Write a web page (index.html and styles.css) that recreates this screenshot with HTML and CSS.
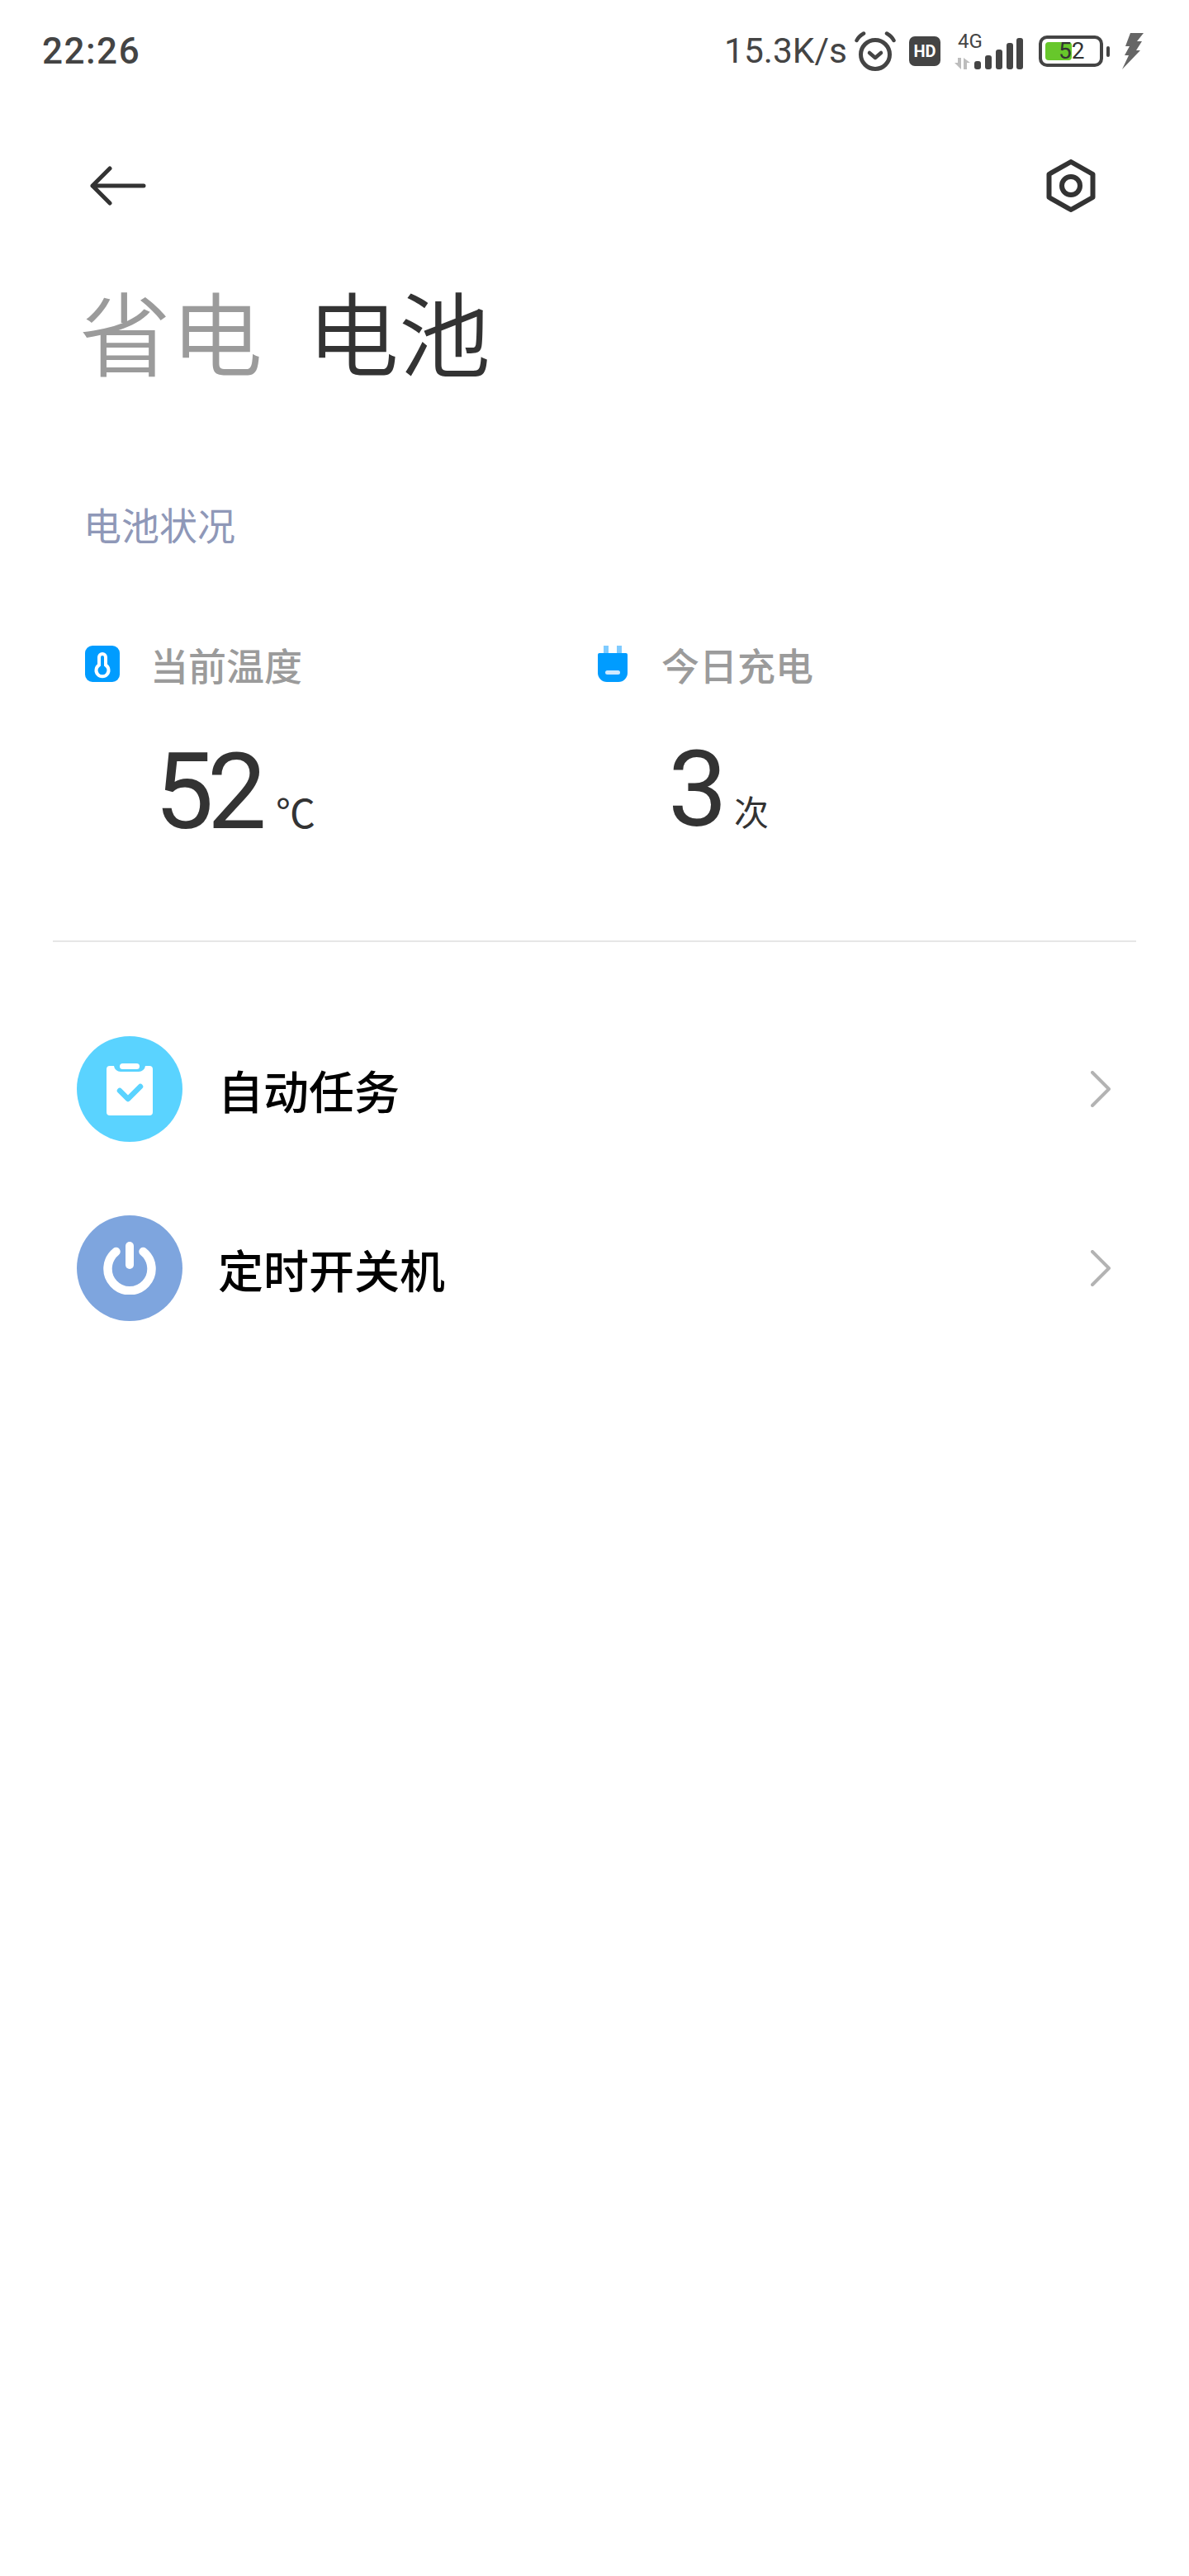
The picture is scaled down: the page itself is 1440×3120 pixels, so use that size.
FILE: index.html
```html
<!DOCTYPE html>
<html lang="zh-CN">
<head>
<meta charset="utf-8">
<title>电池</title>
<link rel="stylesheet" href="styles.css">
</head>
<body>
<div class="screen">
  <header class="status">
    <span class="clock">22:26</span>
    <div class="status-right">
      <span class="speed">15.3K/s</span>
      <svg class="ic-alarm" width="50" height="48" viewBox="0 0 50 48" fill="none" stroke="#444" stroke-linecap="round">
        <circle cx="25" cy="28" r="17.5" stroke-width="5"/>
        <path d="M18 26l7 6 7-6" stroke-width="4.5" stroke-linejoin="round"/>
        <path d="M2.500 11Q5 6 11 2.500M47.500 11Q45 6 39 2.500" stroke-width="4.5"/>
      </svg>
      <span class="hd">HD</span>
      <div class="signal">
        <span class="net">4G</span>
        <svg width="83" height="44" viewBox="0 0 83 44">
          <g fill="#bdbdbd"><path d="M4 30h4v14L0 36h4z"/><path d="M11 30v14h4v-8h4z"/></g>
          <g fill="#444">
            <rect x="24" y="34" width="8" height="10" rx="3"/>
            <rect x="37" y="27" width="8" height="17" rx="3"/>
            <rect x="50" y="20" width="8" height="24" rx="3"/>
            <rect x="63" y="12" width="8" height="32" rx="3"/>
            <rect x="75" y="6" width="8" height="38" rx="3"/>
          </g>
        </svg>
      </div>
      <div class="battery">
        <div class="battery-body"><span class="battery-fill"></span><span class="battery-num">52</span></div>
        <span class="battery-cap"></span>
      </div>
      <svg class="ic-bolt" width="27" height="44" viewBox="0 0 27 44"><path d="M11 0H27L19 10H25L18 21H23L1 44L9 27H4L10 16H5Z" fill="#666"/></svg>
    </div>
  </header>

  <nav class="toolbar">
    <svg width="68" height="48" viewBox="0 0 68 48" fill="none" stroke="#333" stroke-width="5" stroke-linecap="round" stroke-linejoin="round"><path d="M24 3L3 24L24 45M3 24H65"/></svg>
    <svg width="60" height="64" viewBox="0 0 60 64" fill="none" stroke="#333"><path d="M30 3L56.500 18V46L30 61L3.500 46V18Z" stroke-width="6" stroke-linejoin="round"/><circle cx="30" cy="32" r="11" stroke-width="6"/></svg>
  </nav>

  <div class="tabs">
    <span class="tab tab-off">省电</span>
    <span class="tab tab-on">电池</span>
  </div>

  <section class="status-section">
    <h2 class="section-title">电池状况</h2>
    <div class="stats">
      <div class="stat">
        <div class="stat-head">
          <svg width="42" height="44" viewBox="0 0 42 44"><rect width="42" height="44" rx="9" fill="#009cff"/><path d="M21 10a4 4 0 0 1 4 4v9.500a7.500 7.500 0 1 1-8 0V14a4 4 0 0 1 4-4z" fill="none" stroke="#fff" stroke-width="4"/></svg>
          <span class="stat-label">当前温度</span>
        </div>
        <div class="stat-value"><span class="num">52</span><span class="unit unit-c">℃</span></div>
      </div>
      <div class="stat stat-second">
        <div class="stat-head">
          <svg width="36" height="44" viewBox="0 0 36 44"><path d="M7 0h6v10H7zM23 0h6v10h-6z" fill="#7fcbff"/><path d="M0 11a2 2 0 0 1 2-2h32a2 2 0 0 1 2 2v22a11 11 0 0 1-11 11H11A11 11 0 0 1 0 33z" fill="#009cff"/><rect x="9" y="30" width="18" height="5" rx="2.500" fill="#cfeaff"/></svg>
          <span class="stat-label">今日充电</span>
        </div>
        <div class="stat-value"><span class="num">3</span><span class="unit">次</span></div>
      </div>
    </div>
  </section>

  <hr class="divider">

  <ul class="list">
    <li class="row">
      <span class="badge badge-cyan">
        <svg width="56" height="63" viewBox="0 0 56 63"><path d="M4 3h5a8 8 0 0 0 8 7h22a8 8 0 0 0 8-7h5a4 4 0 0 1 4 4v52a4 4 0 0 1-4 4H4a4 4 0 0 1-4-4V7a4 4 0 0 1 4-4z" fill="#fff"/><rect x="16" y="0" width="24" height="7" rx="3.500" fill="#fff"/><path d="M16 33l10 10 15-15" fill="none" stroke="#5ad3ff" stroke-width="6.500" stroke-linecap="round" stroke-linejoin="round"/></svg>
      </span>
      <span class="row-label">自动任务</span>
      <svg class="chev" width="24" height="44" viewBox="0 0 24 44" fill="none" stroke="#b3b3b3" stroke-width="4" stroke-linecap="round" stroke-linejoin="round"><path d="M2 2L22 22L2 42"/></svg>
    </li>
    <li class="row">
      <span class="badge badge-blue">
        <svg width="64" height="64" viewBox="0 0 64 64" fill="none" stroke="#fff" stroke-linecap="round"><path d="M15.500 12a26.500 26.500 0 1 0 33 0" stroke-width="10.500"/><path d="M32 5V28" stroke-width="10"/></svg>
      </span>
      <span class="row-label">定时开关机</span>
      <svg class="chev" width="24" height="44" viewBox="0 0 24 44" fill="none" stroke="#b3b3b3" stroke-width="4" stroke-linecap="round" stroke-linejoin="round"><path d="M2 2L22 22L2 42"/></svg>
    </li>
  </ul>
</div>
</body>
</html>
```

FILE: styles.css
```css
* { box-sizing: border-box; margin: 0; padding: 0; }
html, body { background: #fff; }
body { font-family: "Noto Sans CJK SC", "Noto Sans", sans-serif; width: 1440px; height: 3120px; overflow: hidden; }
.screen { width: 1440px; height: 3120px; display: flex; flex-direction: column; }

.status { height: 124px; padding: 0 55px 0 51px; display: flex; justify-content: space-between; align-items: center; color: #444; }
.clock { font: 500 44px/1 Roboto, sans-serif; letter-spacing: 1.500px; }
.status-right { display: flex; align-items: center; }
.speed { font: 400 42.5px/1 Roboto, sans-serif; margin-right: 9px; }
.ic-alarm { margin-right: 16px; }
.hd { width: 38px; height: 36px; border-radius: 7px; background: #444; color: #fff; font: 700 20px/36px Roboto, sans-serif; text-align: center; margin-right: 17px; }
.signal { position: relative; width: 83px; height: 44px; margin-right: 19px; }
.signal svg { display: block; }
.net { position: absolute; top: -2px; left: 4px; font: 400 24px/1 Roboto, sans-serif; }
.battery { display: flex; align-items: center; margin-right: 14px; }
.battery-body { position: relative; width: 78px; height: 38px; border: 4px solid #444; border-radius: 10px; padding: 4px; }
.battery-fill { display: block; width: 32px; height: 22px; background: #67c72b; border-radius: 4px; }
.battery-num { position: absolute; top: 2px; left: 20px; font: 400 28px/26px Roboto, sans-serif; color: #333; }
.battery-cap { width: 4px; height: 13px; background: #444; border-radius: 2px; margin-left: 4px; }

.toolbar { height: 96px; margin-top: 53px; padding: 0 113px 0 109px; display: flex; justify-content: space-between; align-items: center; }

.tabs { margin-top: 64px; padding-left: 96px; display: flex; gap: 54px; }
.tab { font-size: 111px; line-height: 126px; font-weight: 350; }
.tab-off { color: #9b9b9b; }
.tab-on { color: #333; }

.status-section { padding-left: 103px; margin-top: 140px; }
.section-title { font-size: 46px; line-height: 62px; font-weight: 400; color: #8f98b8; margin-left: -2px; }
.stats { display: flex; margin-top: 109px; }
.stat { width: 621px; }
.stat-head { display: flex; align-items: center; gap: 37px; height: 60px; }
.stat-second .stat-head { gap: 41px; }
.stat-label { font-size: 46px; line-height: 60px; font-weight: 500; color: #9b9b9b; }
.stat-value { display: flex; align-items: baseline; padding: 50px 0 0 84px; color: #333; }
.stat-second .stat-value { padding: 47px 0 0 85px; }
.num { font: 400 128px/150px Roboto, sans-serif; letter-spacing: -8px; }
.unit { font-size: 42px; margin-left: 16px; }
.unit-c { font-size: 48px; margin-left: 19px; }

.divider { border: 0; height: 2px; background: #e6e6e6; margin: 105px 64px 0; }

.list { list-style: none; margin-top: 114px; padding: 0 95px 0 93px; }
.row { display: flex; align-items: center; height: 128px; margin-bottom: 89px; }
.badge { width: 128px; height: 128px; border-radius: 50%; display: flex; align-items: center; justify-content: center; margin-right: 43px; }
.badge-cyan { background: #5ad3ff; }
.badge-blue { background: #7ea5de; }
.row-label { flex: 1; font-size: 55px; line-height: 1; font-weight: 500; color: #000; }
```
